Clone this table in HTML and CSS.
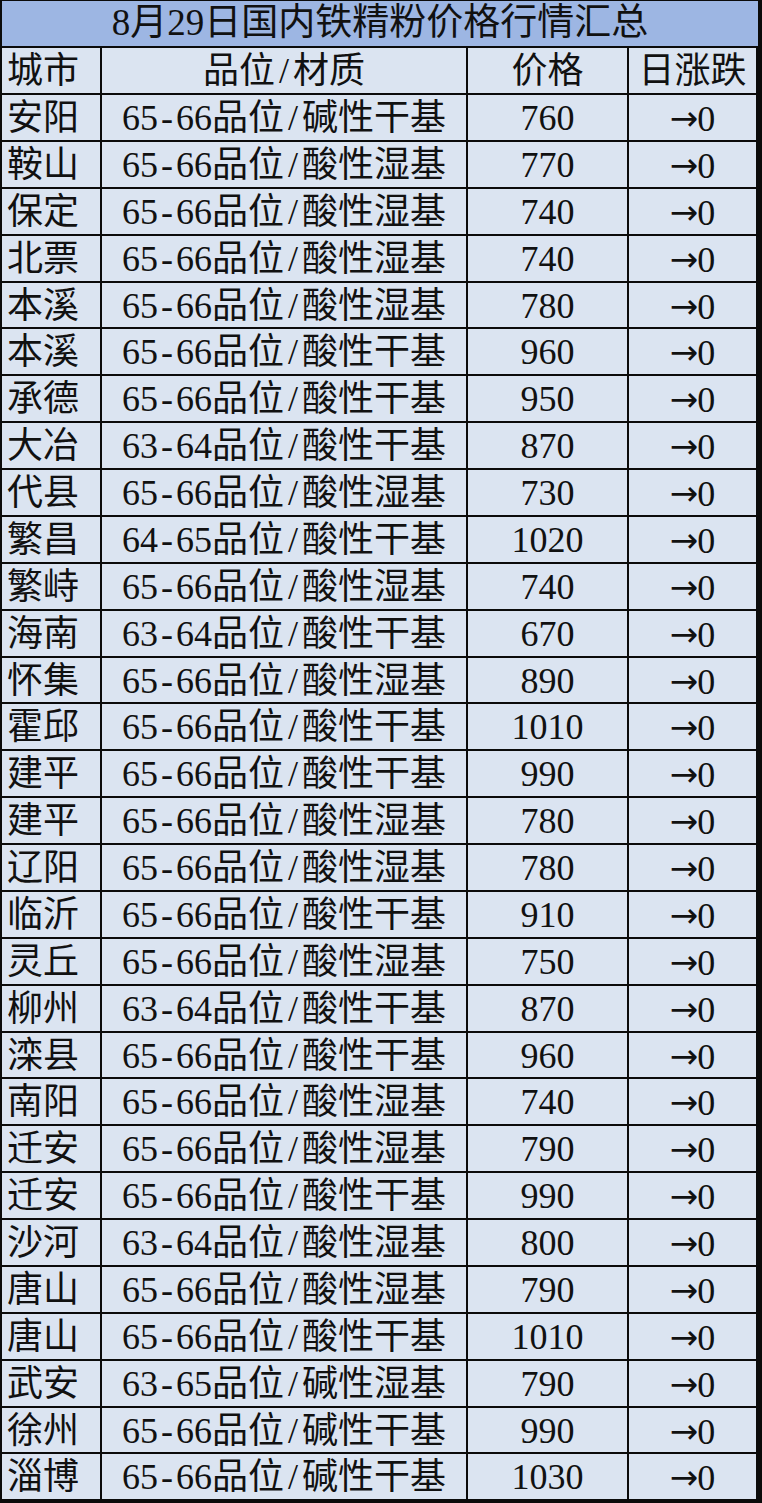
FILE: index.html
```html
<!DOCTYPE html>
<html lang="zh-CN">
<head>
<meta charset="utf-8">
<title>8月29日国内铁精粉价格行情汇总</title>
<link rel="stylesheet" href="styles.css">
</head>
<body>
<div class="sheet">
  <div class="title">8月29日国内铁精粉价格行情汇总</div>
  <div class="c city">城市</div><div class="c mid">品位<span class="hw">/</span>材质</div><div class="c mid">价格</div><div class="c mid">日涨跌</div>
  <div class="c city">安阳</div><div class="c mid">65<span class="hw">-</span>66品位<span class="hw">/</span>碱性干基</div><div class="c mid">760</div><div class="c mid"><span class="arr">→</span>0</div>
  <div class="c city">鞍山</div><div class="c mid">65<span class="hw">-</span>66品位<span class="hw">/</span>酸性湿基</div><div class="c mid">770</div><div class="c mid"><span class="arr">→</span>0</div>
  <div class="c city">保定</div><div class="c mid">65<span class="hw">-</span>66品位<span class="hw">/</span>酸性湿基</div><div class="c mid">740</div><div class="c mid"><span class="arr">→</span>0</div>
  <div class="c city">北票</div><div class="c mid">65<span class="hw">-</span>66品位<span class="hw">/</span>酸性湿基</div><div class="c mid">740</div><div class="c mid"><span class="arr">→</span>0</div>
  <div class="c city">本溪</div><div class="c mid">65<span class="hw">-</span>66品位<span class="hw">/</span>酸性湿基</div><div class="c mid">780</div><div class="c mid"><span class="arr">→</span>0</div>
  <div class="c city">本溪</div><div class="c mid">65<span class="hw">-</span>66品位<span class="hw">/</span>酸性干基</div><div class="c mid">960</div><div class="c mid"><span class="arr">→</span>0</div>
  <div class="c city">承德</div><div class="c mid">65<span class="hw">-</span>66品位<span class="hw">/</span>酸性干基</div><div class="c mid">950</div><div class="c mid"><span class="arr">→</span>0</div>
  <div class="c city">大冶</div><div class="c mid">63<span class="hw">-</span>64品位<span class="hw">/</span>酸性干基</div><div class="c mid">870</div><div class="c mid"><span class="arr">→</span>0</div>
  <div class="c city">代县</div><div class="c mid">65<span class="hw">-</span>66品位<span class="hw">/</span>酸性湿基</div><div class="c mid">730</div><div class="c mid"><span class="arr">→</span>0</div>
  <div class="c city">繁昌</div><div class="c mid">64<span class="hw">-</span>65品位<span class="hw">/</span>酸性干基</div><div class="c mid">1020</div><div class="c mid"><span class="arr">→</span>0</div>
  <div class="c city">繁峙</div><div class="c mid">65<span class="hw">-</span>66品位<span class="hw">/</span>酸性湿基</div><div class="c mid">740</div><div class="c mid"><span class="arr">→</span>0</div>
  <div class="c city">海南</div><div class="c mid">63<span class="hw">-</span>64品位<span class="hw">/</span>酸性干基</div><div class="c mid">670</div><div class="c mid"><span class="arr">→</span>0</div>
  <div class="c city">怀集</div><div class="c mid">65<span class="hw">-</span>66品位<span class="hw">/</span>酸性湿基</div><div class="c mid">890</div><div class="c mid"><span class="arr">→</span>0</div>
  <div class="c city">霍邱</div><div class="c mid">65<span class="hw">-</span>66品位<span class="hw">/</span>酸性干基</div><div class="c mid">1010</div><div class="c mid"><span class="arr">→</span>0</div>
  <div class="c city">建平</div><div class="c mid">65<span class="hw">-</span>66品位<span class="hw">/</span>酸性干基</div><div class="c mid">990</div><div class="c mid"><span class="arr">→</span>0</div>
  <div class="c city">建平</div><div class="c mid">65<span class="hw">-</span>66品位<span class="hw">/</span>酸性湿基</div><div class="c mid">780</div><div class="c mid"><span class="arr">→</span>0</div>
  <div class="c city">辽阳</div><div class="c mid">65<span class="hw">-</span>66品位<span class="hw">/</span>酸性湿基</div><div class="c mid">780</div><div class="c mid"><span class="arr">→</span>0</div>
  <div class="c city">临沂</div><div class="c mid">65<span class="hw">-</span>66品位<span class="hw">/</span>酸性干基</div><div class="c mid">910</div><div class="c mid"><span class="arr">→</span>0</div>
  <div class="c city">灵丘</div><div class="c mid">65<span class="hw">-</span>66品位<span class="hw">/</span>酸性湿基</div><div class="c mid">750</div><div class="c mid"><span class="arr">→</span>0</div>
  <div class="c city">柳州</div><div class="c mid">63<span class="hw">-</span>64品位<span class="hw">/</span>酸性干基</div><div class="c mid">870</div><div class="c mid"><span class="arr">→</span>0</div>
  <div class="c city">滦县</div><div class="c mid">65<span class="hw">-</span>66品位<span class="hw">/</span>酸性干基</div><div class="c mid">960</div><div class="c mid"><span class="arr">→</span>0</div>
  <div class="c city">南阳</div><div class="c mid">65<span class="hw">-</span>66品位<span class="hw">/</span>酸性湿基</div><div class="c mid">740</div><div class="c mid"><span class="arr">→</span>0</div>
  <div class="c city">迁安</div><div class="c mid">65<span class="hw">-</span>66品位<span class="hw">/</span>酸性湿基</div><div class="c mid">790</div><div class="c mid"><span class="arr">→</span>0</div>
  <div class="c city">迁安</div><div class="c mid">65<span class="hw">-</span>66品位<span class="hw">/</span>酸性干基</div><div class="c mid">990</div><div class="c mid"><span class="arr">→</span>0</div>
  <div class="c city">沙河</div><div class="c mid">63<span class="hw">-</span>64品位<span class="hw">/</span>酸性湿基</div><div class="c mid">800</div><div class="c mid"><span class="arr">→</span>0</div>
  <div class="c city">唐山</div><div class="c mid">65<span class="hw">-</span>66品位<span class="hw">/</span>酸性湿基</div><div class="c mid">790</div><div class="c mid"><span class="arr">→</span>0</div>
  <div class="c city">唐山</div><div class="c mid">65<span class="hw">-</span>66品位<span class="hw">/</span>酸性干基</div><div class="c mid">1010</div><div class="c mid"><span class="arr">→</span>0</div>
  <div class="c city">武安</div><div class="c mid">63<span class="hw">-</span>65品位<span class="hw">/</span>碱性湿基</div><div class="c mid">790</div><div class="c mid"><span class="arr">→</span>0</div>
  <div class="c city">徐州</div><div class="c mid">65<span class="hw">-</span>66品位<span class="hw">/</span>碱性干基</div><div class="c mid">990</div><div class="c mid"><span class="arr">→</span>0</div>
  <div class="c city">淄博</div><div class="c mid">65<span class="hw">-</span>66品位<span class="hw">/</span>碱性干基</div><div class="c mid">1030</div><div class="c mid"><span class="arr">→</span>0</div>
</div>
</body>
</html>
```

FILE: styles.css
```css
html, body {
  margin: 0;
  padding: 0;
  background: #0b0b0b;
}

.sheet {
  width: 762px;
  height: 1503px;
  box-sizing: border-box;
  padding: 1px 6px 4px 2px;
  background: #0b0b0b;
  display: grid;
  grid-template-columns: 98px 364px 159px 127px;
  grid-template-rows: 45px 45px repeat(30, 44.875px);
  column-gap: 2px;
  row-gap: 2px;
  font-family: "Liberation Serif", "Noto Sans CJK SC", serif;
  color: #111;
  overflow: hidden;
}

.title {
  grid-column: 1 / -1;
  background: #9db6e3;
  font-size: 37px;
  line-height: 40px;
  padding-top: 2px;
  text-align: center;
  margin-right: -2px;
  white-space: nowrap;
}

.c {
  background: #dbe4f1;
  font-size: 36px;
  line-height: 40px;
  padding-top: 3px;
  white-space: nowrap;
  overflow: hidden;
}

.city {
  text-align: left;
  padding-left: 5px;
}

.mid {
  text-align: center;
}

.hw {
  display: inline-block;
  width: 0.5em;
  text-align: center;
}

.arr {
  font-family: "DejaVu Sans", sans-serif;
  font-size: 34px;
  vertical-align: 1px;
  margin-right: -1px;
}
```
